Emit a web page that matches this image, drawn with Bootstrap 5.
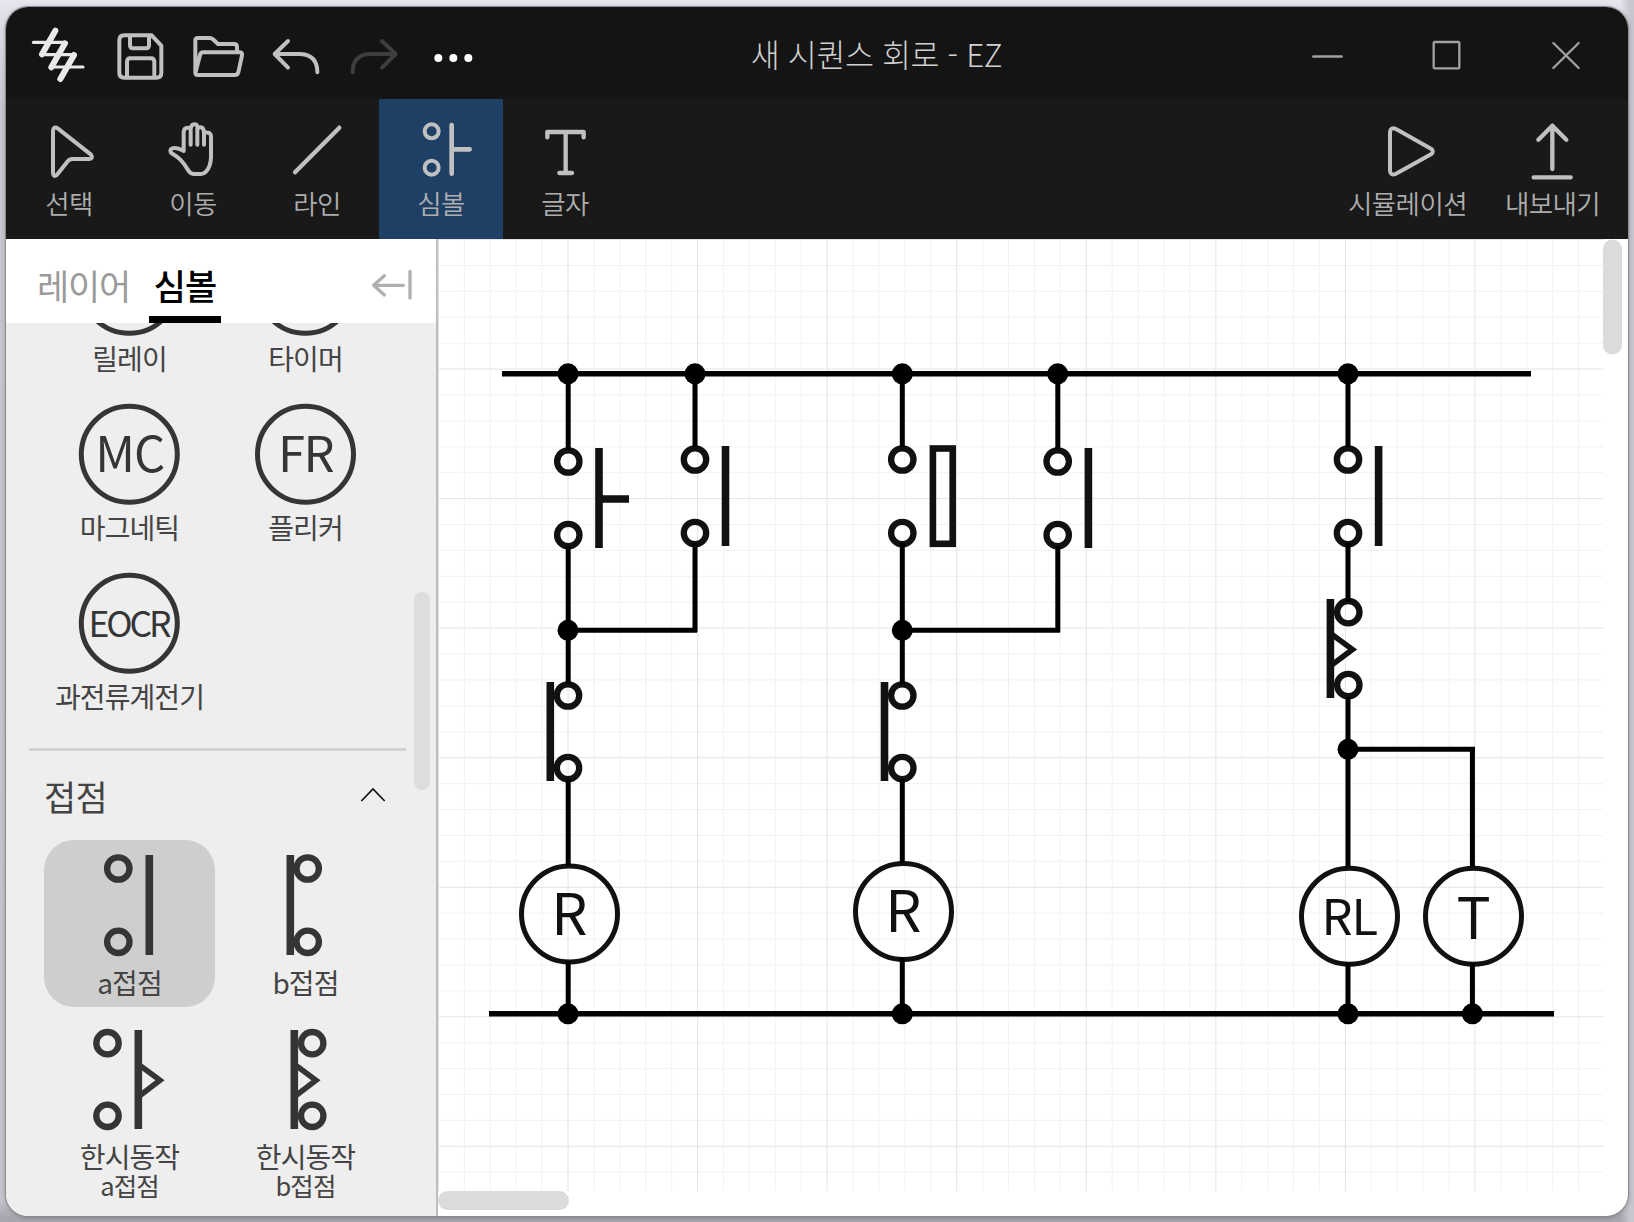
<!DOCTYPE html>
<html lang="ko">
<head>
<meta charset="utf-8">
<title>새 시퀀스 회로 - EZ</title>
<link href="https://cdn.jsdelivr.net/npm/bootstrap@5.3.0/dist/css/bootstrap.min.css" rel="stylesheet">
<style>
  html, body { height: 1222px; overflow: hidden; }
  body { font-family: "Noto Sans CJK KR", "Noto Sans", sans-serif; padding: 7px 6px 6px;
    background: linear-gradient(90deg, transparent 1620px, #c6c6ce 1630px), linear-gradient(180deg, #e6e7ee 0, #e0e1e8 18px, #c8c9d0 110px, #c5c6cd 1200px, #a6a6ae 1218px); }
  svg { display: block; flex: none; }
  .app-window { height: 1209px; border-radius: 22px; background: #fff; box-shadow: 0 0 0 1px #8c8c90, 0 1px 5px rgba(0,0,0,.35); }
  .title-bar { height: 92px; background: #141414; padding-left: 17px; }
  .title-text { font-size: 31.5px; font-weight: 300; color: #d0d0d0; padding: 1px 7px 0 0; letter-spacing: -.4px; }
  .tool-bar { height: 140px; background: #191919; padding: 0 13px 0 1px; }
  .tool { width: 124px; color: #adadad; font-size: 26.5px; font-weight: 350; letter-spacing: -.6px; line-height: 29px; }
  .tool.active { background: #1f4065; }
  .tool-sim { width: 145px; margin-right: 10px; }
  .tool-export { width: 125px; }
  .ico { fill: none; stroke: #c0c0c0; stroke-width: 12; stroke-linecap: round; stroke-linejoin: round; }
  .side-panel { width: 432px; border-right: 2px solid #bdbdbd; background: #eee; }
  .side-head { height: 84px; background: #fff; padding: 0 21px 0 31px; }
  .tab-item { font-size: 35px; letter-spacing: -1.2px; line-height: 46px; padding-top: 23px; height: 84px; color: #9a9a9a; }
  .tab-item.active { font-weight: 500; letter-spacing: -.9px; color: #000; border-bottom: 7px solid #000; width: 72px; margin-left: 19px; }
  .symbol-list { margin-top: -107px; padding-left: 38px; width: 430px; }
  .symbol-grid { gap: 2px 5px; }
  .contact-grid { gap: 8px 5px; }
  .tile { width: 171px; height: 167px; color: #444; font-size: 28px; letter-spacing: -.9px; line-height: 34px; border-radius: 30px; }
  .tile.active { background: #cecece; }
  .tile-two { line-height: 29px; height: 190px; }
  .tile-two .second { font-size: 25.5px; line-height: 28px; }
  .two-label { margin-top: 2px; }
  .sym { fill: none; stroke: #353535; stroke-width: 6.3; letter-spacing: 0; }
  .sym text { fill: #353535; stroke: none; }
  .divider { height: 3px; background: #d2d2d2; margin: 27px 30px 0 -15px; }
  .group-head { height: 89px; font-size: 35px; color: #444; letter-spacing: -.6px; padding: 1px 0 0; }
  .scroll-side { right: 6px; top: 353px; width: 16px; height: 198px; border-radius: 8px; background: #ddd; }
  .wire { fill: none; stroke: #000; stroke-width: 5; }
  .part { fill: none; stroke: #111; stroke-width: 6.3; }
  .part text { fill: #111; stroke: none; }
  .bar8 { stroke-width: 7.6; }
</style>
</head>
<body>
<svg width="0" height="0" class="position-absolute">
  <defs>
    <pattern id="minor" x="438" y="239" width="25.91" height="25.91" patternUnits="userSpaceOnUse"><path d="M0 .5H26M.5 0V26" stroke="#000" stroke-opacity=".05" fill="none"/></pattern>
    <pattern id="major" x="438" y="239" width="129.55" height="129.55" patternUnits="userSpaceOnUse"><path d="M0 .5H130M.5 0V130" stroke="#000" stroke-opacity=".06" fill="none"/></pattern>
  </defs>
</svg>
<div class="app-window d-flex flex-column overflow-hidden">
  <header class="title-bar d-flex align-items-center">
    <svg width="78" height="92" viewBox="69 21 234 276" class="ico" style="stroke:#e9e9e9"><path stroke-width="18" d="M166 92 126 163M195 130 154 202M222 165 181 237"/><path stroke-width="9.500" d="M100 127H195M126 164H222M154 201H249"/></svg>
    <svg width="78" height="92" viewBox="303 21 234 276" class="ico"><path d="M373 106H455L484 137V218Q484 233 469 233H373Q358 233 358 218V121Q358 106 373 106ZM390 108V136Q390 145 399 145H438Q447 145 447 136V108M381 232V186Q381 175 391 175H453Q463 175 463 186V232"/></svg>
    <svg width="78" height="92" viewBox="537 21 234 276" class="ico"><path d="M586 218V122Q586 114 594 114H629Q635 114 639 118L654 132H702Q711 132 711 141V154M610 157H718Q728 157 726 166L715 217Q713 225 705 225H592Q584 225 587 216L600 165Q602 157 610 157Z"/></svg>
    <svg width="78" height="92" viewBox="771 21 234 276" class="ico"><path d="M864 123 824 162 864 203M824 162H902Q952 165 952 217"/></svg>
    <svg width="78" height="92" viewBox="1005 21 234 276" class="ico" style="stroke:#3e3e3e"><path d="M1146 123 1187 162 1146 203M1187 162H1108Q1058 165 1058 217"/></svg>
    <svg width="79" height="92" viewBox="1239 21 237 276" fill="#fff"><circle cx="1315" cy="174" r="12"/><circle cx="1360" cy="174" r="12"/><circle cx="1405" cy="174" r="12"/></svg>
    <div class="title-text flex-grow-1 text-center">새 시퀀스 회로 - EZ</div>
    <svg width="119" height="92" viewBox="3804 21 357 276" class="ico"><path transform="translate(3870)" stroke="#a0a0a0" stroke-width="7.500" d="M70 169.500H155"/></svg>
    <svg width="119" height="92" viewBox="4161 21 357 276" class="ico"><rect x="4301" y="126" width="77" height="79" rx="3" stroke="#a0a0a0" stroke-width="7"/></svg>
    <svg width="122" height="92" viewBox="4518 21 366 276" class="ico"><path transform="translate(3870)" stroke="#a0a0a0" stroke-width="7" d="M790 129 866 204M866 129 790 204"/></svg>
  </header>

  <nav class="tool-bar d-flex">
    <div class="tool text-center"><svg width="124" height="89" viewBox="21 297 372 267" class="ico"><path d="M159 392V518Q160 534 171 524L202 485Q208 477 218 477H267Q281 475 273 464L174 386Q161 377 159 392Z"/></svg>선택</div>
    <div class="tool text-center"><svg width="124" height="89" viewBox="393 297 372 267" class="ico"><path d="M551 453V396Q552 383 563 383Q571 383 572 386Q574 373 583 373Q592 373 594 384Q610 375 612 398Q633 394 633 410V472Q632 500 618 515Q612 522 603 522H582Q573 522 566 513C547 480 534 471 514 459Q507 449 517 445Q529 441 551 453M572 386V434M592 384V434M612 396V434"/></svg>이동</div>
    <div class="tool text-center"><svg width="124" height="89" viewBox="765 297 372 267" class="ico"><path stroke-width="13" d="M885 517 1018 383"/></svg>라인</div>
    <div class="tool active text-center"><svg width="124" height="89" viewBox="1137 297 372 267" class="ico"><circle cx="1295" cy="394" r="21"/><circle cx="1295" cy="503" r="21"/><path stroke-width="14" d="M1355 375V521M1355 448H1409"/></svg>심볼</div>
    <div class="tool text-center"><svg width="124" height="89" viewBox="1509 297 372 267" class="ico"><path stroke-width="13" d="M1642 412V396H1751V412M1697 396V518M1678 519H1716"/></svg>글자</div>
    <div class="tool tool-sim text-center ms-auto"><svg width="145" height="89" viewBox="4005 297 435 267" class="ico"><path transform="translate(3870)" d="M300 397V512Q302 529 318 521L423 463Q434 455 423 446L318 387Q302 379 300 397Z"/></svg>시뮬레이션</div>
    <div class="tool tool-export text-center"><svg width="125" height="89" viewBox="4470 297 375 267" class="ico"><path transform="translate(3870)" stroke-width="13" d="M787 377V507M745 419 787 377 829 419M731 532H842"/></svg>내보내기</div>
  </nav>

  <main class="d-flex flex-grow-1 overflow-hidden">
    <aside class="side-panel position-relative flex-shrink-0 overflow-hidden">
      <div class="side-head d-flex position-relative z-1">
        <div class="tab-item">레이어</div>
        <div class="tab-item active text-center">심볼</div>
        <svg width="46" height="84" viewBox="1107 12 138 252" class="ico ms-auto" style="stroke:#b0b0b0"><path stroke-width="10" d="M1121 151H1210M1153 122 1121 151 1153 180M1230 109V189"/></svg>
      </div>
      <div class="symbol-list">
        <div class="symbol-grid d-flex flex-wrap">
          <div class="tile text-center"><svg width="171" height="125" class="sym"><circle cx="85.300" cy="69.300" r="48" stroke-width="5"/></svg>릴레이</div>
          <div class="tile text-center"><svg width="171" height="125" class="sym"><circle cx="85.300" cy="69.300" r="48" stroke-width="5"/></svg>타이머</div>
          <div class="tile text-center"><svg width="171" height="125" class="sym"><circle cx="85.300" cy="69.300" r="48" stroke-width="5"/><text x="85.700" y="87" font-size="49" text-anchor="middle" letter-spacing="-1">MC</text></svg>마그네틱</div>
          <div class="tile text-center"><svg width="171" height="125" class="sym"><circle cx="85.500" cy="69.300" r="48" stroke-width="5"/><text x="85.500" y="87" font-size="49" text-anchor="middle" letter-spacing="-1.500">FR</text></svg>플리커</div>
          <div class="tile text-center"><svg width="171" height="125" class="sym"><circle cx="85.300" cy="69.300" r="48" stroke-width="5"/><text x="44.500" y="83" font-size="35.500" textLength="83">EOCR</text></svg>과전류계전기</div>
        </div>
        <div class="divider"></div>
        <div class="group-head d-flex align-items-center">접점
          <svg width="30" height="20" viewBox="1074 764 90 60" class="ms-auto" style="margin:0 48px 3px 0" fill="none" stroke="#111" stroke-width="5"><path d="M1084 812 1119 776 1154 812"/></svg>
        </div>
        <div class="contact-grid d-flex flex-wrap">
          <div class="tile active text-center"><svg width="171" height="125" viewBox="44 840 171 125" class="sym"><circle cx="118.300" cy="868.500" r="11.200"/><circle cx="118.300" cy="941.800" r="11.200"/><path class="bar8" d="M149.300 855V955"/></svg>a접점</div>
          <div class="tile text-center"><svg width="171" height="125" viewBox="220 840 171 125" class="sym"><circle cx="307.700" cy="868.500" r="11.200"/><circle cx="307.700" cy="941.800" r="11.200"/><path class="bar8" d="M290.300 855V955"/></svg>b접점</div>
          <div class="tile tile-two text-center"><svg width="171" height="125" viewBox="44 1015 171 125" class="sym"><circle cx="107.500" cy="1043.200" r="11.200"/><circle cx="107.500" cy="1115.800" r="11.200"/><path class="bar8" d="M138.300 1030V1129"/><path stroke-width="5.500" d="M140 1065.500 160 1080.300 140 1095.500"/></svg><div class="two-label">한시동작<div class="second">a접점</div></div></div>
          <div class="tile tile-two text-center"><svg width="171" height="125" viewBox="220 1015 171 125" class="sym"><circle cx="312.200" cy="1043.200" r="11.200"/><circle cx="312.200" cy="1115.800" r="11.200"/><path class="bar8" d="M294.300 1030V1129"/><path stroke-width="5.500" d="M296 1065.500 316 1080.300 296 1095.500"/></svg><div class="two-label">한시동작<div class="second">b접점</div></div></div>
        </div>
      </div>
      <div class="scroll-side position-absolute"><!-- thumb --></div>
    </aside>

    <svg width="1190" height="977" viewBox="438 239 1190 977">
      <rect x="438" y="239" width="1165" height="952" fill="url(#minor)"/>
      <rect x="438" y="239" width="1165" height="952" fill="url(#major)"/>
      <!-- contacts and coils -->
      <g class="part">
        <circle cx="568.300" cy="461.500" r="11.200"/><circle cx="568.300" cy="535" r="11.200"/><path class="bar8" d="M599 448V548M599 499H629"/>
        <circle cx="695" cy="459.500" r="11.200"/><circle cx="695" cy="533" r="11.200"/><path class="bar8" d="M725.500 446V546"/>
        <circle cx="568" cy="695.500" r="11.200"/><circle cx="568" cy="768" r="11.200"/><path class="bar8" d="M550.300 682V781"/>
        <circle cx="902.300" cy="459.500" r="11.200"/><circle cx="902.300" cy="533" r="11.200"/><rect x="932.900" y="448.500" width="19.800" height="95.300" stroke-width="6.600"/>
        <circle cx="1057.700" cy="461.500" r="11.200"/><circle cx="1057.700" cy="535" r="11.200"/><path class="bar8" d="M1088.400 448V548"/>
        <circle cx="902.300" cy="695.500" r="11.200"/><circle cx="902.300" cy="768" r="11.200"/><path class="bar8" d="M884.500 682V781"/>
        <circle cx="1348" cy="459.500" r="11.200"/><circle cx="1348" cy="533" r="11.200"/><path class="bar8" d="M1378.600 446V546"/>
        <circle cx="1348.300" cy="612.200" r="11.200"/><circle cx="1348.300" cy="685" r="11.200"/><path class="bar8" d="M1330.400 599V698"/><path stroke-width="5.500" d="M1332 634.500 1352.500 649.500 1332 664.800"/>
        <g stroke-width="5"><circle cx="569.500" cy="914" r="48"/><circle cx="903.500" cy="911.500" r="48"/><circle cx="1349.500" cy="916.300" r="48"/><circle cx="1473.500" cy="916.300" r="48"/></g>
        <g text-anchor="middle"><text x="569.300" y="935" font-size="57">R</text><text x="903.300" y="932" font-size="57">R</text><text x="1349.300" y="935" font-size="49" letter-spacing="-1">RL</text><text x="1473.500" y="939" font-size="57">T</text></g>
      </g>
      <!-- wiring -->
      <g class="wire">
        <path stroke-width="5.600" d="M502 373.800H1531M489 1013.800H1554"/>
        <path d="M568.200 374V450M568.200 546V684M568.200 779V866M568.200 961V1014M695 374V447M695 543V632M568 630.200H697M902.300 374V447M902.300 543V684M902.300 779V863M902.300 958V1014M1057.800 374V450M1057.800 546V632M902 630.200H1060M1348 374V447M1348 543V602M1348 697V867M1348 963V1014M1348 749.300H1475M1472.400 748V867M1472.400 963V1014"/>
      </g>
      <g fill="#000"><circle cx="568" cy="373.800" r="10.500"/><circle cx="695" cy="373.800" r="10.500"/><circle cx="902.300" cy="373.800" r="10.500"/><circle cx="1057.700" cy="373.800" r="10.500"/><circle cx="1348" cy="373.800" r="10.500"/><circle cx="568" cy="630.300" r="10.500"/><circle cx="902.300" cy="630.300" r="10.500"/><circle cx="1348" cy="749.300" r="10.500"/><circle cx="568" cy="1013.800" r="10.500"/><circle cx="902.300" cy="1013.800" r="10.500"/><circle cx="1348" cy="1013.800" r="10.500"/><circle cx="1472.400" cy="1013.800" r="10.500"/></g>
      <!-- scroll thumbs -->
      <g fill="#dadcda"><rect x="1603" y="239.500" width="19" height="115" rx="9.500"/><rect x="438" y="1191" width="131" height="19" rx="9.500"/></g>
    </svg>
  </main>
</div>
<script src="https://cdn.jsdelivr.net/npm/bootstrap@5.3.0/dist/js/bootstrap.bundle.min.js"></script>
</body>
</html>
